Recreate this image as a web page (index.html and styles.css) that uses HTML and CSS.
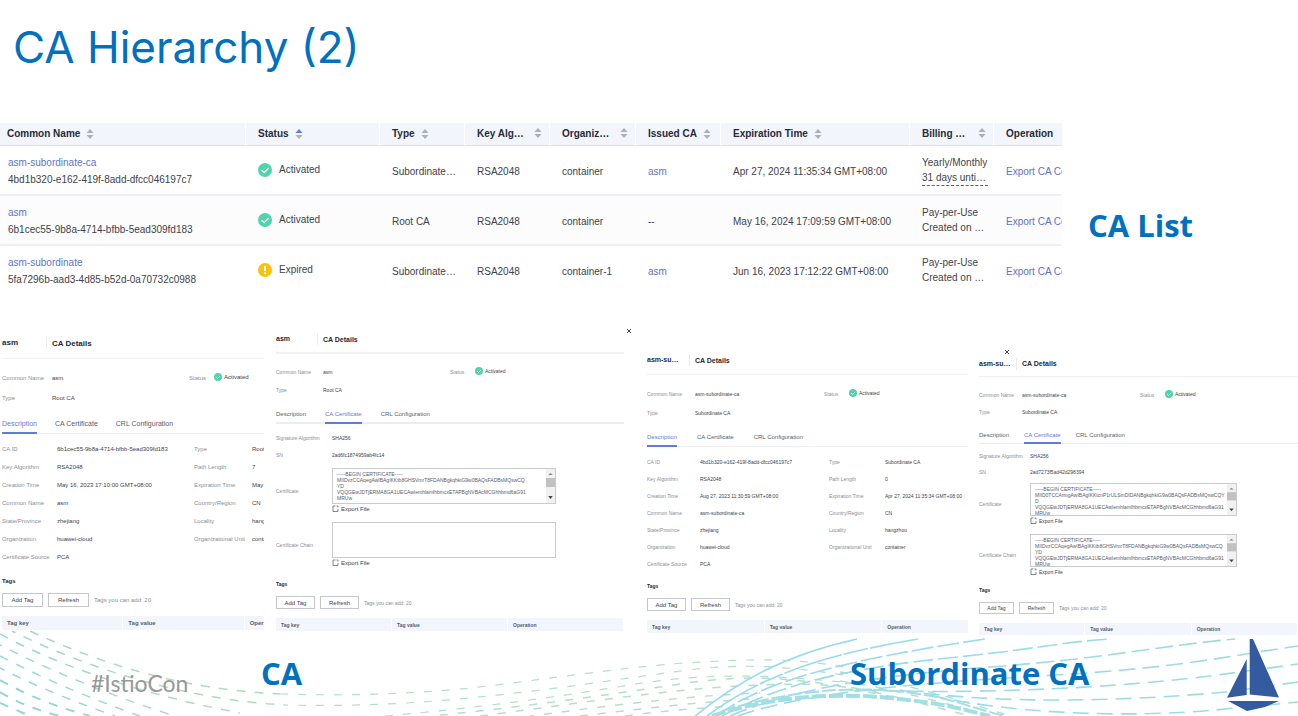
FILE: index.html
```html
<!DOCTYPE html>
<html lang="en">
<head>
<meta charset="utf-8">
<title>CA Hierarchy (2)</title>
<link rel="stylesheet" href="styles.css">
</head>
<body>
<svg class="defs" aria-hidden="true">
  <symbol id="ok" viewBox="0 0 14 14"><circle cx="7" cy="7" r="7" fill="#50d4ab"/><path d="M3.600 7.200 6.200 9.600 10.500 5.200" fill="none" stroke="#fff" stroke-width="1.300"/></symbol>
  <symbol id="warn" viewBox="0 0 14 14"><circle cx="7" cy="7" r="7" fill="#fac20a"/><path d="M6 3h2v5H6zM6 9.300h2v2H6z" fill="#fff"/></symbol>
  <symbol id="sort" viewBox="0 0 8 10"><path class="up" d="M4 0 7.500 4h-7z"/><path class="down" d="M4 10 7.500 6h-7z"/></symbol>
  <symbol id="export" viewBox="0 0 14 14"><path d="M7 2H2v11h10V8M9 2h3v3" fill="none" stroke="#575d6c" stroke-width="1.500"/></symbol>
  <symbol id="close" viewBox="0 0 6 6"><path d="M1 1 5 5M5 1 1 5" fill="none" stroke="#444" stroke-width="1"/></symbol>
  <symbol id="bar" viewBox="0 0 8 34" preserveAspectRatio="none"><path d="M0 0h8v34H0z" fill="#f1f1f1"/><path d="M2 6 4 4 6 6z" fill="#888"/><path d="M0 9h8v9H0z" fill="#c1c1c1"/><path d="M2 27 4 30 6 27z" fill="#444"/></symbol>
</svg>
<main class="slide">
  <h1 class="title">CA Hierarchy (2)</h1>

  <section class="list">
    <table class="ca-table">
      <colgroup><col><col class="w-status"><col class="w-85"><col class="w-85"><col class="w-86"><col class="w-85"><col class="w-time"><col class="w-84"><col class="w-op"></colgroup>
      <thead><tr>
        <th>Common Name<svg class="sort"><use href="#sort"/></svg></th>
        <th>Status<svg class="sort sort--asc" viewBox="0 0 8 10"><path class="up" d="M4 0 7.500 4h-7z"/><path d="M4 10 7.500 6h-7z"/></svg></th>
        <th>Type<svg class="sort"><use href="#sort"/></svg></th>
        <th class="spread"><div>Key Alg…<svg class="sort"><use href="#sort"/></svg></div></th>
        <th class="spread"><div>Organiz…<svg class="sort"><use href="#sort"/></svg></div></th>
        <th>Issued CA<svg class="sort"><use href="#sort"/></svg></th>
        <th>Expiration Time<svg class="sort"><use href="#sort"/></svg></th>
        <th class="spread"><div>Billing …<svg class="sort"><use href="#sort"/></svg></div></th>
        <th>Operation</th>
      </tr></thead>
      <tbody>
        <tr>
          <td class="name"><a href="#">asm-subordinate-ca</a><span>4bd1b320-e162-419f-8add-dfcc046197c7</span></td>
          <td class="state"><div><svg class="dot"><use href="#ok"/></svg>Activated</div></td>
          <td>Subordinate…</td><td>RSA2048</td><td>container</td><td><a href="#">asm</a></td>
          <td>Apr 27, 2024 11:35:34 GMT+08:00</td>
          <td class="bill">Yearly/Monthly<span class="due">31 days unti…</span></td>
          <td><a href="#">Export CA Cert</a></td>
        </tr>
        <tr>
          <td class="name"><a href="#">asm</a><span>6b1cec55-9b8a-4714-bfbb-5ead309fd183</span></td>
          <td class="state"><div><svg class="dot"><use href="#ok"/></svg>Activated</div></td>
          <td>Root CA</td><td>RSA2048</td><td>container</td><td>--</td>
          <td>May 16, 2024 17:09:59 GMT+08:00</td>
          <td class="bill">Pay-per-Use<span>Created on …</span></td>
          <td><a href="#">Export CA Cert</a></td>
        </tr>
        <tr>
          <td class="name"><a href="#">asm-subordinate</a><span>5fa7296b-aad3-4d85-b52d-0a70732c0988</span></td>
          <td class="state"><div><svg class="dot"><use href="#warn"/></svg>Expired</div></td>
          <td>Subordinate…</td><td>RSA2048</td><td>container-1</td><td><a href="#">asm</a></td>
          <td>Jun 16, 2023 17:12:22 GMT+08:00</td>
          <td class="bill">Pay-per-Use<span>Created on …</span></td>
          <td><a href="#">Export CA Cert</a></td>
        </tr>
      </tbody>
    </table>
    <h2 class="caption">CA List</h2>
  </section>

  <section class="panels">
    <article class="panel panel--root-info">
      <header class="head"><span>asm</span><h3>CA Details</h3></header>
      <dl class="summary">
        <dt>Common Name</dt><dd>asm</dd><dt>Status</dt><dd class="on"><svg><use href="#ok"/></svg>Activated</dd>
        <dt>Type</dt><dd>Root CA</dd>
      </dl>
      <nav class="tabs"><button class="active">Description</button><button>CA Certificate</button><button>CRL Configuration</button></nav>
      <dl class="facts">
        <dt>CA ID</dt><dd>6b1cec55-9b8a-4714-bfbb-5ead309fd183</dd><dt>Type</dt><dd>Root CA</dd>
        <dt>Key Algorithm</dt><dd>RSA2048</dd><dt>Path Length</dt><dd>7</dd>
        <dt>Creation Time</dt><dd>May 16, 2023 17:10:00 GMT+08:00</dd><dt>Expiration Time</dt><dd>May 16</dd>
        <dt>Common Name</dt><dd>asm</dd><dt>Country/Region</dt><dd>CN</dd>
        <dt>State/Province</dt><dd>zhejiang</dd><dt>Locality</dt><dd>hangzhou</dd>
        <dt>Organization</dt><dd>huawei-cloud</dd><dt>Organizational Unit</dt><dd>container</dd>
        <dt>Certificate Source</dt><dd>PCA</dd>
      </dl>
      <h4 class="tags">Tags</h4>
      <div class="actions"><button>Add Tag</button><button>Refresh</button><span>Tags you can add: 20</span></div>
      <table class="tag-table"><tr><th>Tag key</th><th>Tag value</th><th>Operation</th></tr></table>
    </article>

    <article class="panel panel--root-cert">
      <button class="close" aria-label="Close"><svg><use href="#close"/></svg></button>
      <header class="head"><span>asm</span><h3>CA Details</h3></header>
      <dl class="summary">
        <dt>Common Name</dt><dd>asm</dd><dt>Status</dt><dd class="on"><svg><use href="#ok"/></svg>Activated</dd>
        <dt>Type</dt><dd>Root CA</dd>
      </dl>
      <nav class="tabs"><button>Description</button><button class="active">CA Certificate</button><button>CRL Configuration</button></nav>
      <dl class="facts"><dt>Signature Algorithm</dt><dd>SHA256</dd><dt>SN</dt><dd>2ad6fc1874959ab4fc14</dd></dl>
      <div class="cert"><label for="c1">Certificate</label>
        <div class="box"><textarea id="c1" readonly>-----BEGIN CERTIFICATE-----
MIIDvzCCAqegAwIBAgIKKtb8GHSVmrT8FDANBgkqhkiG9w0BAQsFADBsMQswCQ
YD
VQQGEwJDTjERMA8GA1UECAwIemhlamlhbmcxETAPBgNVBAcMCGhhbmd6aG91
MRUw</textarea><svg class="bar"><use href="#bar"/></svg><button class="export"><svg><use href="#export"/></svg>Export File</button></div></div>
      <div class="cert"><label for="c2">Certificate Chain</label>
        <div class="box"><textarea id="c2" readonly></textarea><button class="export"><svg><use href="#export"/></svg>Export File</button></div></div>
      <h4 class="tags">Tags</h4>
      <div class="actions"><button>Add Tag</button><button>Refresh</button><span>Tags you can add: 20</span></div>
      <table class="tag-table"><tr><th>Tag key</th><th>Tag value</th><th>Operation</th></tr></table>
    </article>

    <article class="panel panel--sub-info">
      <header class="head"><span>asm-su…</span><h3>CA Details</h3></header>
      <dl class="summary">
        <dt>Common Name</dt><dd>asm-subordinate-ca</dd><dt>Status</dt><dd class="on"><svg><use href="#ok"/></svg>Activated</dd>
        <dt>Type</dt><dd>Subordinate CA</dd>
      </dl>
      <nav class="tabs"><button class="active">Description</button><button>CA Certificate</button><button>CRL Configuration</button></nav>
      <dl class="facts">
        <dt>CA ID</dt><dd>4bd1b320-e162-419f-8add-dfcc046197c7</dd><dt>Type</dt><dd>Subordinate CA</dd>
        <dt>Key Algorithm</dt><dd>RSA2048</dd><dt>Path Length</dt><dd>0</dd>
        <dt>Creation Time</dt><dd>Aug 27, 2023 11:30:59 GMT+08:00</dd><dt>Expiration Time</dt><dd>Apr 27, 2024 11:35:34 GMT+08:00</dd>
        <dt>Common Name</dt><dd>asm-subordinate-ca</dd><dt>Country/Region</dt><dd>CN</dd>
        <dt>State/Province</dt><dd>zhejiang</dd><dt>Locality</dt><dd>hangzhou</dd>
        <dt>Organization</dt><dd>huawei-cloud</dd><dt>Organizational Unit</dt><dd>container</dd>
        <dt>Certificate Source</dt><dd>PCA</dd>
      </dl>
      <h4 class="tags">Tags</h4>
      <div class="actions"><button>Add Tag</button><button>Refresh</button><span>Tags you can add: 20</span></div>
      <table class="tag-table"><tr><th>Tag key</th><th>Tag value</th><th>Operation</th></tr></table>
    </article>

    <article class="panel panel--sub-cert">
      <button class="close" aria-label="Close"><svg><use href="#close"/></svg></button>
      <header class="head"><span>asm-su…</span><h3>CA Details</h3></header>
      <dl class="summary">
        <dt>Common Name</dt><dd>asm-subordinate-ca</dd><dt>Status</dt><dd class="on"><svg><use href="#ok"/></svg>Activated</dd>
        <dt>Type</dt><dd>Subordinate CA</dd>
      </dl>
      <nav class="tabs"><button>Description</button><button class="active">CA Certificate</button><button>CRL Configuration</button></nav>
      <dl class="facts"><dt>Signature Algorithm</dt><dd>SHA256</dd><dt>SN</dt><dd>2ad7273f5ad42d298394</dd></dl>
      <div class="cert"><label for="c3">Certificate</label>
        <div class="box"><textarea id="c3" readonly>-----BEGIN CERTIFICATE-----
MIID0TCCArmgAwIBAgIKKtcnP1rULSmDIDANBgkqhkiG9w0BAQsFADBsMQswCQY
D
VQQGEwJDTjERMA8GA1UECAwIemhlamlhbmcxETAPBgNVBAcMCGhhbmd6aG91
MRUw</textarea><svg class="bar"><use href="#bar"/></svg><button class="export"><svg><use href="#export"/></svg>Export File</button></div></div>
      <div class="cert"><label for="c4">Certificate Chain</label>
        <div class="box"><textarea id="c4" readonly>-----BEGIN CERTIFICATE-----
MIIDvzCCAqegAwIBAgIKKtb8GHSVmrT8FDANBgkqhkiG9w0BAQsFADBsMQswCQ
YD
VQQGEwJDTjERMA8GA1UECAwIemhlamlhbmcxETAPBgNVBAcMCGhhbmd6aG91
MRUw</textarea><svg class="bar"><use href="#bar"/></svg><button class="export"><svg><use href="#export"/></svg>Export File</button></div></div>
      <h4 class="tags">Tags</h4>
      <div class="actions"><button>Add Tag</button><button>Refresh</button><span>Tags you can add: 20</span></div>
      <table class="tag-table"><tr><th>Tag key</th><th>Tag value</th><th>Operation</th></tr></table>
    </article>
  </section>

  <footer class="foot">
    <svg class="waves" viewBox="0 631 1298 85" preserveAspectRatio="none" aria-hidden="true">
      <defs>
        <linearGradient id="g" gradientUnits="userSpaceOnUse" x1="0" y1="716" x2="110" y2="631"><stop offset="0" stop-color="#8fd5dc"/><stop offset="1" stop-color="#abdcc0"/></linearGradient>
        <linearGradient id="b" gradientUnits="userSpaceOnUse" x1="700" y1="0" x2="1298" y2="0"><stop offset="0" stop-color="#93d8f5"/><stop offset="0.500" stop-color="#9bdcec"/><stop offset="1" stop-color="#9cdcd8"/></linearGradient>
      </defs>
      <g fill="none" stroke="url(#g)" stroke-width="1.500" stroke-dasharray="9 9">
        <path d="M30 631C110 668 190 690 280 694"/>
        <path d="M12 631C90 670 190 700 285 705" stroke-dashoffset="5"/>
        <path d="M0 634C70 672 160 698 240 713"/>
        <path d="M0 645C60 676 130 702 175 716" stroke-dashoffset="7"/>
        <path d="M0 656C50 682 100 702 140 716"/>
        <path d="M0 668C35 686 80 704 115 716" stroke-dashoffset="4"/>
        <path d="M0 680C30 697 60 708 90 716" stroke-width="2"/>
        <path d="M0 692C20 704 40 711 60 716" stroke-width="2"/>
        <path d="M0 703 30 716" stroke-width="2"/>
      </g>
      <g fill="none" stroke="#b5dfc8" stroke-width="1.200" stroke-dasharray="8 10">
        <path d="M280 694C350 696 400 694 450 690S620 667 685 663S790 657 850 668"/>
        <path d="M285 705C370 707 437 702 507 694S613 680 680 671S790 667 850 676" stroke-dashoffset="5"/>
        <path d="M385 716C445 711 540 700 617 687S750 672 860 684"/>
        <path d="M430 716C500 710 600 696 680 684S800 680 880 692" stroke-dashoffset="8" stroke-width="1.500"/>
        <path d="M480 716C560 706 660 690 740 686S840 684 900 698" stroke-width="1.500"/>
        <path d="M530 716C600 707 680 696 760 693" stroke-dashoffset="4" stroke-width="1.500"/>
        <path d="M580 716C630 710 700 702 750 699" stroke-width="1.500"/>
        <path d="M625 716C660 711 700 708 735 706" stroke-width="1.500"/>
        <path d="M840 672C900 682 960 700 1010 716M840 681C890 688 950 704 990 716M850 690C890 694 930 706 970 716" stroke-width="1.500"/>
      </g>
      <g fill="none" stroke="url(#b)" stroke-width="1.600">
        <path d="M695 716C740 680 785 655 857 639"/>
        <path d="M707 716C755 680 815 656 918 639" stroke-dasharray="60 2 25 2"/>
        <path d="M716 716C760 684 830 662 985 639" stroke-dasharray="22 4"/>
        <path d="M722 716C780 684 850 668 948 658S1060 642 1111 639" stroke-dasharray="20 5"/>
        <path d="M730 716C790 690 870 676 990 667S1150 647 1235 639" stroke-dasharray="18 6"/>
        <path d="M738 716C800 694 900 684 1040 676S1215 658 1298 646" stroke-dasharray="17 7"/>
        <path d="M860 690C960 694 1100 690 1218 675L1298 664" stroke-dasharray="16 8"/>
        <path d="M900 690C990 704 1120 702 1225 692L1298 682" stroke-dasharray="16 8"/>
        <path d="M930 695C1010 714 1130 718 1215 710L1298 702" stroke-dasharray="16 8"/>
      </g>
      <g fill="none" stroke="#a2dfe2" stroke-dasharray="14 3">
        <path d="M712 716C765 698 830 692 890 698S960 709 990 716" stroke-width="4"/>
        <path d="M722 711C780 693 840 686 895 691S970 708 1005 716" stroke-width="2"/>
      </g>
    </svg>
    <p class="hash">#IstioCon</p>
    <h2 class="caption">CA</h2>
    <h2 class="caption">Subordinate CA</h2>
    <svg class="logo" viewBox="1227 639 52 72" role="img" aria-label="Istio"><path d="M1249.700 639h3.300l26 58.500-29.300-3zM1246.700 659v36l-19.700 2.700zM1228 701h51l-14 6-18 4z" fill="#345a9f"/></svg>
  </footer>
</main>
</body>
</html>
```
FILE: styles.css
```css
* { box-sizing: border-box; }
body { margin: 0; background: #fff; font-family: "Liberation Sans", Arial, sans-serif; color: #3d424d; }
h1, h2, h3, h4, p, dl, dd { margin: 0; }
button { font-family: inherit; padding: 0; border: 0; background: none; color: inherit; }
a { color: #5e73cc; text-decoration: none; }
.defs { position: absolute; width: 0; height: 0; }

.slide { min-height: 100vh; display: flex; flex-direction: column; overflow: hidden; }
.title { padding: 20px 13px 0; height: 123px; font: 400 44px/54px Inter, sans-serif; color: #0070c0; }
.caption { font: 700 31px/40px "Open Sans", sans-serif; color: #0070c0; white-space: nowrap; }

.list { display: grid; grid-template-columns: minmax(0, 1fr) 236px; align-items: center; }
.list .caption { padding: 30px 0 0 26px; }
.ca-table { width: 100%; table-layout: fixed; border-collapse: separate; border-spacing: 0; font-size: 10px; line-height: 15px; }
.w-status { width: 134px; }
.w-85 { width: 85px; }
.w-86 { width: 86px; }
.w-84 { width: 84px; }
.w-time { width: 189px; }
.w-op { width: 68px; }
.ca-table th { height: 23px; padding: 0 0 2px 12px; text-align: left; background: #f2f5fc; color: #252b3a; border-right: 1px solid #fff; border-bottom: 1px solid #dfe1e6; white-space: nowrap; overflow: hidden; }
.ca-table th:first-child { padding-left: 7px; }
.ca-table th:last-child { border-right: 0; }
.ca-table td { height: 50px; padding: 2px 0 0 12px; border-bottom: 2px solid #eeeff5; white-space: nowrap; overflow: hidden; }
.ca-table td:first-child { padding-left: 8px; }
.ca-table tr:last-child td { border-color: transparent; }
.ca-table tr:nth-child(even) td { background: #fcfcfc; }
.ca-table .bill { padding-top: 0; }
.spread div { display: flex; justify-content: space-between; align-items: center; padding-right: 7px; }
.sort { width: 8px; height: 10px; margin-left: 6px; vertical-align: -2px; fill: #adb0b8; }
.sort--asc .up { fill: #5e7ce0; }
.name a, .name span { display: block; line-height: 17px; }
.state div { display: flex; align-items: center; gap: 7px; padding-bottom: 3px; }
.dot { width: 14px; height: 14px; }
.bill span { display: block; width: 66px; }
.bill .due { border-bottom: 1px dashed #575d6c; }

.panels { display: grid; grid-template-columns: 264fr 383fr 321fr 330fr; padding-top: 24px; }
.panel { position: relative; min-width: 0; overflow: hidden; background: #fff; font-size: var(--text); white-space: nowrap; }
.panel--root-info { --text: 6px; --tab: 7px; --title: 8px; --head: 31px; --line: 1px; --row: 18px; --sum: 20px; --tabs: 19px; --key: 50px; --fact: 55px; --c3: 137px; --c4: 58px; --status: 137px; --btn: 41px; --btnh: 14px; --th: 14px; --gap: 18px; --tagtop: 8px; padding: 8px 0 0 2px; }
.panel--root-cert { --text: 5px; --tab: 6px; --title: 7px; --head: 28px; --line: 2px; --row: 17px; --sum: 18px; --tabs: 18px; --key: 47px; --fact: 56px; --status: 127px; --btn: 39px; --btnh: 13px; --th: 13px; --gap: 19px; --ta: 36px; --taw: 224px; --cert: 45px; --cgap: 9px; --tagtop: 10px; padding: 6px 23px 0 12px; }
.panel--sub-info { --text: 5px; --tab: 6px; --title: 7px; --head: 29px; --line: 1px; --row: 17px; --sum: 19px; --tabs: 18px; --key: 48px; --fact: 53px; --c3: 129px; --c4: 56px; --status: 129px; --btn: 39px; --btnh: 13px; --th: 13px; --gap: 20px; --tagtop: 7px; padding: 26px 0 0; }
.panel--sub-cert { --text: 5px; --tab: 6px; --title: 7px; --head: 26px; --line: 1px; --row: 16px; --sum: 17px; --tabs: 17px; --key: 43px; --fact: 51px; --status: 118px; --btn: 35px; --btnh: 12px; --th: 12px; --gap: 15px; --ta: 33px; --taw: 207px; --cert: 42px; --cgap: 9px; --tagtop: 7px; padding: 31px 0 0 11px; }

.close { position: absolute; top: 7px; right: 15px; width: 6px; height: 8px; }
.panel--sub-cert .close { top: 28px; right: auto; left: 36px; }
.close svg { display: block; width: 6px; height: 6px; }
.head { display: grid; grid-template-columns: var(--key) 1fr; align-items: center; height: var(--head); border-bottom: var(--line) solid #f0f1f4; font-size: var(--title); font-weight: 700; color: #252b3a; }
.head span { margin-right: 5px; line-height: 12px; border-right: 1px solid #ebecf0; }
.head h3 { font-size: var(--title); }
dt, label { color: #8a8e99; }
.summary { display: grid; grid-template-columns: var(--key) var(--status) 25px 1fr; grid-auto-rows: var(--sum); align-items: center; margin-top: 9px; }
.on { display: flex; align-items: center; gap: 2px; padding-bottom: 2px; }
.on svg { width: 8px; height: 8px; }
.tabs { display: flex; gap: var(--gap); height: var(--tabs); margin-top: 7px; border-bottom: var(--line) solid #ebedf2; }
.tabs button { font-size: var(--tab); color: #575d6c; height: var(--tabs); border-bottom: 2px solid transparent; }
.tabs .active { color: #5e7ce0; border-color: #5e7ce0; }
.facts { display: grid; grid-template-columns: var(--fact) var(--c3, 1fr) var(--c4, 0) 1fr; grid-auto-rows: var(--row); align-items: center; margin-top: 6px; }
.facts dd, .summary dd { min-width: 0; }
.panel--root-cert .facts, .panel--sub-cert .facts { grid-template-columns: var(--fact) 1fr; margin: 5px 0; }
.panel--sub-cert .facts { margin: 4px 0 3px; }
.cert { display: grid; grid-template-columns: var(--fact) var(--taw); align-items: center; height: var(--cert); }
.cert + .cert { margin-top: var(--cgap); }
.box { position: relative; }
.box textarea { display: block; width: 100%; height: var(--ta); padding: 2px 4px 0; border: 1px solid #c9cbd1; resize: none; overflow: hidden; font: inherit; font-size: 5px; line-height: 6px; color: #575d6c; white-space: pre; }
.bar { position: absolute; top: 1px; right: 1px; width: 9px; height: calc(var(--ta) - 2px); }
.export { display: flex; align-items: center; gap: 2px; height: 9px; font-size: var(--tab); }
.panel--sub-cert .export { font-size: var(--text); }
.export svg { width: 7px; height: 7px; }
.tags { margin: var(--tagtop) 0 0; font-size: var(--text); line-height: 15px; color: #252b3a; }
.actions { display: flex; align-items: center; gap: 5px; margin-top: 4px; color: #8a8e99; }
.actions button { width: var(--btn); height: var(--btnh); border: 1px solid #c4c7cf; font-size: 6px; color: #3d424d; }
.panel--sub-cert .actions button { font-size: var(--text); }
.tag-table { width: 100%; table-layout: fixed; border-spacing: 0; margin-top: 9px; }
.tag-table th { height: var(--th); padding: 0 0 0 5px; background: #f2f5fc; border-right: 1px solid #fff; font-size: var(--text); text-align: left; color: #575d6c; }
.panel--root-info .tag-table { width: 364px; }
.panel--sub-info .tag-table { width: 353px; }

.foot { position: relative; isolation: isolate; flex: 1; display: grid; grid-template-columns: 91fr 170fr 589fr 377fr 71fr; align-items: start; padding-top: 4px; }
.waves { position: absolute; z-index: -1; left: 0; bottom: 0; width: 100%; height: 85px; }
.hash { grid-column: 2; padding-top: 27px; font: 400 23px/34px Lato, sans-serif; color: #999; }
.foot .caption { padding-top: 14px; }
.logo { width: 52px; height: 72px; }
```
